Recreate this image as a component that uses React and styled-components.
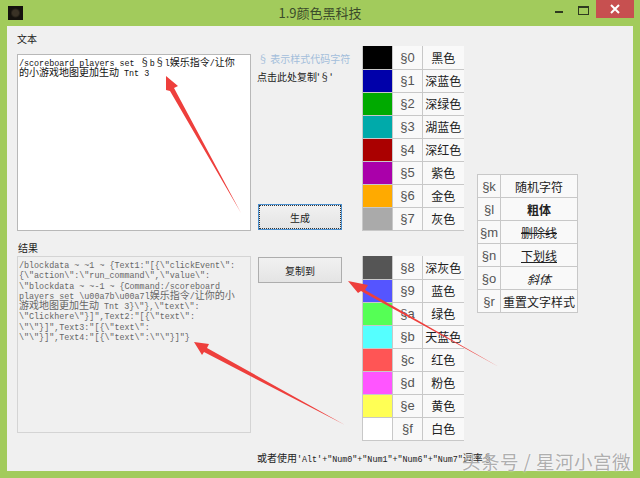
import React from 'react'
import styled, { createGlobalStyle } from 'styled-components'

const CJK = '"Noto Sans CJK SC", sans-serif'
const MONO = '"Liberation Mono", monospace'

const upperColors = [
  ['#000000', '§0', '黑色'],
  ['#0000aa', '§1', '深蓝色'],
  ['#00aa00', '§2', '深绿色'],
  ['#00aaaa', '§3', '湖蓝色'],
  ['#aa0000', '§4', '深红色'],
  ['#aa00aa', '§5', '紫色'],
  ['#ffaa00', '§6', '金色'],
  ['#aaaaaa', '§7', '灰色']
]

const lowerColors = [
  ['#555555', '§8', '深灰色'],
  ['#5555ff', '§9', '蓝色'],
  ['#55ff55', '§a', '绿色'],
  ['#55ffff', '§b', '天蓝色'],
  ['#ff5555', '§c', '红色'],
  ['#ff55ff', '§d', '粉色'],
  ['#ffff55', '§e', '黄色'],
  ['#ffffff', '§f', '白色']
]

const styles = [
  ['§k', '随机字符'],
  ['§l', '粗体', 'bold'],
  ['§m', '删除线', 'strike'],
  ['§n', '下划线', 'under'],
  ['§o', '斜体', 'italic'],
  ['§r', '重置文字样式']
]

const inputLines = [
  '/scoreboard players set §b§l娱乐指令/让你',
  '的小游戏地图更加生动 Tnt 3'
]

const resultLines = [
  '/blockdata ~ ~1 ~ {Text1:"[{\\"clickEvent\\":',
  '{\\"action\\":\\"run_command\\",\\"value\\":',
  '\\"blockdata ~ ~-1 ~ {Command:/scoreboard',
  'players set \\u00a7b\\u00a7l娱乐指令/让你的小',
  '游戏地图更加生动 Tnt 3}\\"},\\"text\\":',
  '\\"Clickhere\\"}]",Text2:"[{\\"text\\":',
  '\\"\\"}]",Text3:"[{\\"text\\":',
  '\\"\\"}]",Text4:"[{\\"text\\":\\"\\"}]"}'
]

// latin runs are narrower than the CJK ones, like the old bitmap font
// and the section sign takes a full cell
const mixed = text =>
  text.split(/([\u4e00-\u9fff]+|§)/).map((part, i) => {
    if (part === '§') return <Section key={i}>§</Section>
    return i % 2 ? part : <Latin key={i}>{part}</Latin>
  })

const ColorTable = ({ rows }) => (
  <ColorGrid>
    <tbody>
      {rows.map(([color, code, name]) => (
        <tr key={code}>
          <Swatch $color={color} />
          <Code>{code}</Code>
          <Name>{name}</Name>
        </tr>
      ))}
    </tbody>
  </ColorGrid>
)

const App = () => (
  <Window>
    <GlobalStyle />
    <TitleBar>
      <AppIcon />
      <Title>1.9颜色黑科技</Title>
      <Controls>
        <MinButton />
        <MaxButton />
        <CloseButton>
          <svg width='10' height='10' viewBox='0 0 10 10'>
            <path d='M1 1 L9 9 M9 1 L1 9' stroke='#fff' strokeWidth='2' />
          </svg>
        </CloseButton>
      </Controls>
    </TitleBar>
    <Body>
      <Pane>
        <PaneLabel>文本</PaneLabel>
        <TextBox>
          {inputLines.map(line => <Line key={line}>{mixed(line)}</Line>)}
        </TextBox>
      </Pane>
      <MiddleTop>
        <Hints>
          <Hint>§ 表示样式代码字符</Hint>
          <CopyHint>点击此处复制'§'</CopyHint>
        </Hints>
        <Button $focused>生成</Button>
      </MiddleTop>
      <TopTable>
        <ColorTable rows={upperColors} />
      </TopTable>
      <StyleColumn>
        <Table>
          <tbody>
            {styles.map(([code, name, kind]) => (
              <tr key={code}>
                <StyleCode>{code}</StyleCode>
                <StyleName $kind={kind}>{name}</StyleName>
              </tr>
            ))}
          </tbody>
        </Table>
      </StyleColumn>
      <ResultPane>
        <ResultLabel>结果</ResultLabel>
        <ResultBox>
          {resultLines.map(line => <Line key={line}>{mixed(line)}</Line>)}
        </ResultBox>
      </ResultPane>
      <MiddleBottom>
        <Button>复制到</Button>
      </MiddleBottom>
      <BottomTable>
        <ColorTable rows={lowerColors} />
      </BottomTable>
      <Note>
        或者使用<Latin>'Alt'+"Num0"+"Num1"+"Num6"+"Num7"</Latin>逗率§
      </Note>
    </Body>
    <Arrows width='640' height='478' viewBox='0 0 640 478'>
      <polygon points='166,76 178,86 174,88 241,213 170,91 166,90' fill='#ee3f3c' />
      <polygon points='194,342 209,344 207,348 345,425 204,352 202,355' fill='#ee3f3c' />
      <polygon points='348,281 368,285 365,290 499,367 361,291 358,293' fill='#ee3f3c' />
    </Arrows>
    <Watermark>头条号 / 星河小宫微</Watermark>
  </Window>
)

export default App

const GlobalStyle = createGlobalStyle`
  html, body {
    margin: 0;
    padding: 0;
    background: #a2cb5c;
  }
`

const Window = styled.div`
  position: relative;
  display: flex;
  flex-direction: column;
  width: 640px;
  height: 478px;
  padding: 0 7px 7px;
  box-sizing: border-box;
  overflow: hidden;
  background: #a2cb5c;
  font-family: ${CJK};
  color: #1a1a1a;
`

const TitleBar = styled.div`
  position: relative;
  display: flex;
  align-items: center;
  height: 26px;
  flex: none;
`

const AppIcon = styled.div`
  width: 15px;
  height: 14px;
  margin-left: 1px;
  background: radial-gradient(circle, #3a3226 0 3px, #15120e 5px);
`

const Title = styled.div`
  position: absolute;
  left: 0;
  right: 0;
  top: 4px;
  text-align: center;
  font-size: 13px;
  line-height: 18px;
  color: #3a4a2a;
`

const Controls = styled.div`
  display: flex;
  align-items: flex-start;
  align-self: flex-start;
  margin-left: auto;
  margin-right: -1px;
`

const MinButton = styled.div`
  width: 8px;
  height: 2px;
  margin: 11px 15px 0 0;
  background: #2f3a20;
`

const MaxButton = styled.div`
  width: 9px;
  height: 6px;
  margin: 6px 7px 0 0;
  border: 1px solid #2f3a20;
  border-top-width: 2px;
`

const CloseButton = styled.div`
  display: flex;
  align-items: center;
  justify-content: center;
  width: 38px;
  height: 18px;
  background: #c75050;
`

const Body = styled.div`
  flex: 1;
  display: grid;
  grid-template-columns: 241px 104px 115px 100px;
  grid-template-rows: 209px 200px 1fr;
  padding: 6px 0 0 10px;
  background: #f0f0f0;
`

const Pane = styled.div`
  display: flex;
  flex-direction: column;
  align-items: flex-start;
`

const ResultPane = styled(Pane)`
  grid-row: 2;
  grid-column: 1;
`

const PaneLabel = styled.div`
  font-size: 10px;
  line-height: 14px;
  height: 14px;
  margin-bottom: 8px;
`

const ResultLabel = styled(PaneLabel)`
  margin-bottom: 1px;
  margin-left: 1px;
`

const TextBox = styled.div`
  width: 234px;
  height: 177px;
  box-sizing: border-box;
  padding: 2px 1px;
  background: #fff;
  border: 1px solid #b8b8b8;
  font-size: 10px;
  color: #111;
`

const ResultBox = styled(TextBox)`
  background: #f0f0f0;
  border-color: #d4d4d4;
  color: #666;
`

const Line = styled.div`
  height: 10.3px;
  line-height: 10.3px;
  white-space: pre;
`

const Latin = styled.span`
  font-family: ${MONO};
  font-size: 8.4px;
`

const Section = styled.span`
  display: inline-block;
  width: 10px;
  text-align: center;
`

const MiddleTop = styled.div`
  display: flex;
  flex-direction: column;
  justify-content: space-between;
  align-items: flex-start;
  height: 198px;
`

const Hints = styled.div`
  padding-top: 19px;
  white-space: nowrap;
`

const Hint = styled.div`
  font-size: 10px;
  line-height: 16px;
  color: #a3bedb;
`

const CopyHint = styled.div`
  font-size: 10px;
  line-height: 16px;
  margin: 2px 0 0 -1px;
  color: #222;
`

const Button = styled.div`
  display: flex;
  align-items: center;
  justify-content: center;
  width: 84px;
  height: 26px;
  box-sizing: border-box;
  background: linear-gradient(#f1f1f1, #e4e4e4);
  border: 1px solid ${props => (props.$focused ? '#4a90d0' : '#adadad')};
  outline: ${props => (props.$focused ? '1px dotted #333' : 'none')};
  outline-offset: -2px;
  font-size: 10px;
  color: #222;
`

const MiddleBottom = styled.div`
  grid-row: 2;
  grid-column: 2;
  padding-top: 16px;
`

const TopTable = styled.div`
  grid-column: 3;
  padding-top: 14px;
`

const BottomTable = styled.div`
  grid-row: 2;
  grid-column: 3;
  padding-top: 15px;
`

const StyleColumn = styled.div`
  grid-column: 4;
  grid-row: 1 / span 2;
  padding-top: 142px;
`

const Table = styled.table`
  border-collapse: collapse;
  table-layout: fixed;

  td {
    height: 23px;
    padding: 0;
    box-sizing: border-box;
    border: 1px solid #c8c8c8;
    text-align: center;
  }
`

const ColorGrid = styled(Table)`
  tr:first-child td {
    border-top: none;
  }

  td:last-child {
    border-right: none;
  }
`

const Swatch = styled.td`
  width: 30px;
  min-width: 30px;
  background: ${props => props.$color};
`

const Code = styled.td`
  width: 30px;
  min-width: 30px;
  background: #f9f9f9;
  font-family: "Liberation Sans", sans-serif;
  font-size: 13px;
  color: #555;
`

const Name = styled.td`
  width: 41px;
  min-width: 41px;
  background: #f9f9f9;
  font-size: 12px;
  color: #222;
  white-space: nowrap;
`

const StyleCode = styled(Code)`
  width: 23px;
  min-width: 23px;
`

const kindStyles = {
  bold: 'font-weight: 700;',
  strike: 'text-decoration: line-through;',
  under: 'text-decoration: underline;',
  italic: 'font-style: italic;'
}

const StyleName = styled(Name)`
  width: 77px;
  min-width: 77px;
  ${props => kindStyles[props.$kind] || ''}
`

const Note = styled.div`
  grid-row: 3;
  grid-column: 2 / span 3;
  margin-top: 10px;
  margin-left: -1px;
  font-size: 10px;
  line-height: 14px;
  white-space: nowrap;
  color: #222;
`

const Arrows = styled.svg`
  position: absolute;
  left: 0;
  top: 0;
  pointer-events: none;
`

const Watermark = styled.div`
  position: absolute;
  right: 9px;
  bottom: 4px;
  font-size: 18.5px;
  line-height: 26px;
  letter-spacing: 0.5px;
  color: rgba(165, 165, 165, 0.9);
  text-shadow: 0 0 2px rgba(255, 255, 255, 0.9);
  white-space: nowrap;
`
